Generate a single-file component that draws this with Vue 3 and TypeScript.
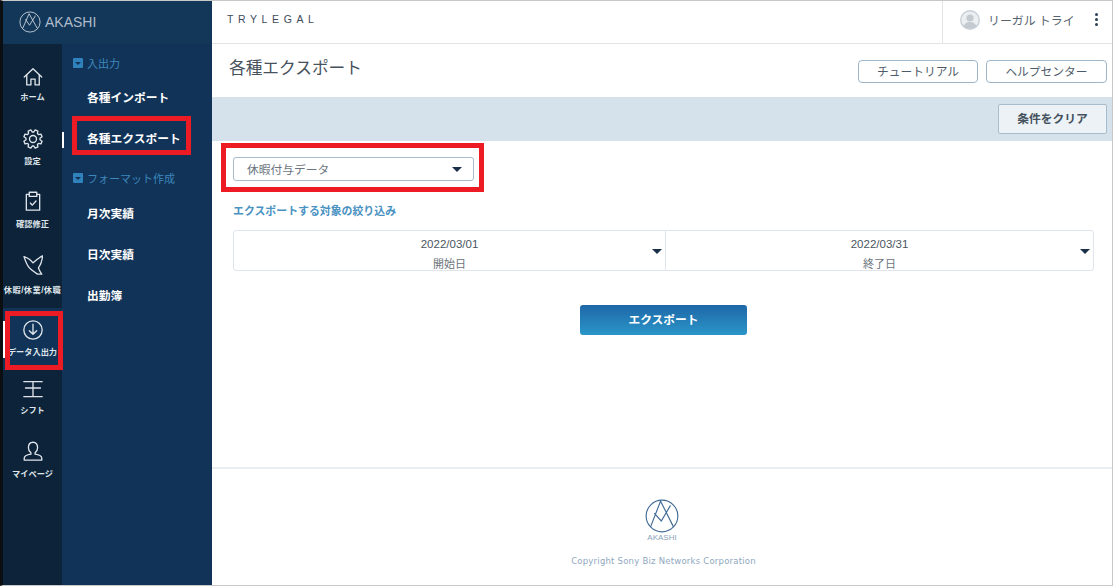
<script setup lang="ts">
interface NavItem { label: string; icon: string; active?: boolean }
const nav: NavItem[] = [
  { label: 'ホーム', icon: 'home' },
  { label: '設定', icon: 'gear' },
  { label: '確認修正', icon: 'check' },
  { label: '休暇/休業/休職', icon: 'dove' },
  { label: 'データ入出力', icon: 'download', active: true },
  { label: 'シフト', icon: 'shift' },
  { label: 'マイページ', icon: 'user' },
]

function gearPath(): string {
  const pts: string[] = []
  const at = (r: number, deg: number): string => {
    const a = (deg * Math.PI) / 180
    return `${(12 + r * Math.cos(a)).toFixed(2)} ${(12 + r * Math.sin(a)).toFixed(2)}`
  }
  for (let i = 0; i < 8; i++) {
    const c = i * 45 + 22.5
    pts.push(at(8.4, c - 17), at(11.2, c - 9), at(11.2, c + 9), at(8.4, c + 17))
  }
  return `M${pts.join(' L')} Z`
}
const gear = gearPath()
</script>

<template>
  <div class="frame">
    <aside class="side">
      <div class="brand">
        <svg class="brand-logo" viewBox="0 0 24 24" fill="none">
          <circle cx="12" cy="12" r="11" />
          <path d="M4 19 L11 3 L20 19 M7 9 L11.5 15.5 L18 5" />
        </svg>
        <span>AKASHI</span>
      </div>
      <div class="side-body">
        <nav class="rail">
          <a v-for="n in nav" :key="n.label" class="rail-item" :class="[`i-${n.icon}`, { active: n.active }]">
            <svg class="rail-icon" viewBox="0 0 24 24" fill="none">
              <template v-if="n.icon === 'home'">
                <path d="M1.5 12 L12 2 L22.5 12" />
                <path d="M4.5 9.5 V21.5 H9.5 V14.5 H14.5 V21.5 H19.5 V9.5" />
              </template>
              <template v-else-if="n.icon === 'gear'">
                <circle cx="12" cy="12" r="4.2" />
                <path :d="gear" />
              </template>
              <template v-else-if="n.icon === 'check'">
                <path d="M7.5 4 H4 V23 H20 V4 H16.5" />
                <path d="M7.5 1.5 H16.5 V6.5 H7.5 Z" />
                <path d="M8.8 14.5 L11.2 17 L15.6 12" />
              </template>
              <template v-else-if="n.icon === 'dove'">
                <path d="M1.2 2 C5 3 9 6 12 9.5 C15 7 19 3 23.5 1 C23 7 21 12 18.5 15.5 C19.5 18 21 21 22.5 23 L17.5 23 C13 20 9 17.5 6.5 14 C4 10.5 2.5 6 1.2 2 Z" />
              </template>
              <template v-else-if="n.icon === 'download'">
                <circle cx="12" cy="12" r="11" />
                <path d="M12 5 V17 M7.6 12.8 L12 17.2 L16.4 12.8" />
              </template>
              <template v-else-if="n.icon === 'shift'">
                <path d="M1 2 H23 M3 9.6 H21 M1 20 H23 M12 2 V20" />
              </template>
              <template v-else>
                <path d="M12 1.5 C8 1.5 6.5 4.5 6.5 8 C6.5 11 8 13 9.5 14.2 V15.8 C5.5 16.5 1.5 17.5 1.5 20.5 V23 H22.5 V20.5 C22.5 17.5 18.5 16.5 14.5 15.8 V14.2 C16 13 17.5 11 17.5 8 C17.5 4.5 16 1.5 12 1.5 Z" />
              </template>
            </svg>
            <span class="rail-label">{{ n.label }}</span>
          </a>
        </nav>
        <div class="sub">
          <div class="sub-head"><i class="sq"></i>入出力</div>
          <a class="sub-link">各種インポート</a>
          <a class="sub-link">各種エクスポート</a>
          <div class="sub-head second"><i class="sq"></i>フォーマット作成</div>
          <a class="sub-link">月次実績</a>
          <a class="sub-link">日次実績</a>
          <a class="sub-link">出勤簿</a>
        </div>
      </div>
    </aside>

    <main class="main">
      <header class="top">
        <div class="company">TRYLEGAL</div>
        <div class="user">
          <svg class="avatar" viewBox="0 0 20 20">
            <circle cx="10" cy="10" r="10" fill="#c9d0d6" />
            <circle cx="10" cy="10" r="8.6" fill="#eceff1" />
            <circle cx="10" cy="8" r="3.6" fill="#c3cad0" />
            <path d="M3.6 16 C5 12.8 7.5 12 10 12 C12.5 12 15 12.8 16.4 16 C14.6 17.8 12.4 18.6 10 18.6 C7.6 18.6 5.4 17.8 3.6 16 Z" fill="#c3cad0" />
          </svg>
          <span class="user-name">リーガル トライ</span>
          <span class="dots"><i></i><i></i><i></i></span>
        </div>
      </header>

      <div class="title-row">
        <h1>各種エクスポート</h1>
        <div class="title-btns">
          <button class="outline b1">チュートリアル</button>
          <button class="outline b2">ヘルプセンター</button>
        </div>
      </div>

      <div class="band"><button class="clear">条件をクリア</button></div>

      <section class="content">
        <div class="select"><span class="select-text">休暇付与データ</span><i class="caret"></i></div>
        <div class="filter-title">エクスポートする対象の絞り込み</div>
        <div class="range">
          <div class="range-cell start">
            <div class="date">2022/03/01</div>
            <div class="date-label">開始日</div>
            <i class="caret"></i>
          </div>
          <div class="range-cell end">
            <div class="date">2022/03/31</div>
            <div class="date-label">終了日</div>
            <i class="caret"></i>
          </div>
        </div>
        <div class="export-row"><button class="export">エクスポート</button></div>
      </section>

      <footer class="foot">
        <svg class="foot-logo" viewBox="0 0 24 24" fill="none">
          <circle cx="12" cy="12" r="11.2" />
          <path d="M4 19.5 L11 1.5 L20 19.5 M6.5 10 L11.5 15.5 L18 4.5" />
        </svg>
        <div class="foot-name">AKASHI</div>
        <div class="copy">Copyright Sony Biz Networks Corporation</div>
      </footer>
    </main>

    <div class="mark m1"></div>
    <div class="mark m2"></div>
    <div class="mark m3"></div>
  </div>
</template>

<style scoped>
.frame {
  position: relative;
  display: flex;
  width: 1113px;
  height: 586px;
  box-sizing: border-box;
  border-top: 1px solid #c8c8c8;
  border-bottom: 1px solid #c8c8c8;
  border-left: 3px solid #0b0f12;
  border-right: 1px solid #c8c8c8;
  overflow: hidden;
  background: #fff;
  font-family: "Liberation Sans", "Noto Sans CJK JP", sans-serif;
  color: #3b4a5a;
}
.side {
  width: 209px;
  flex: none;
  display: flex;
  flex-direction: column;
  background: #113358;
}
.brand {
  height: 43px;
  flex: none;
  box-sizing: border-box;
  display: flex;
  align-items: center;
  padding: 0 0 1px 16px;
  gap: 4px;
  color: #aebccb;
  font-size: 14px;
  background: #133759;
}
.brand-logo { width: 22px; height: 22px; }
.brand-logo circle, .brand-logo path { stroke: #c4ced8; stroke-width: 1; }
.side-body { flex: 1; display: flex; min-height: 0; }
.rail {
  width: 59px;
  flex: none;
  background: #0d2339;
  display: flex;
  flex-direction: column;
}
.rail-item {
  flex: none;
  display: flex;
  flex-direction: column;
  align-items: center;
  box-sizing: border-box;
  position: relative;
  color: #dfe5ea;
}
.i-home { height: 63px; padding-top: 23px; }
.i-gear { height: 63px; padding-top: 22px; }
.i-check { height: 63px; padding-top: 21px; }
.i-dove { height: 75px; padding-top: 22px; }
.i-download { height: 62px; padding-top: 12px; }
.i-shift { height: 61px; padding-top: 10px; }
.i-user { height: 60px; padding-top: 10px; }
.rail-item.active { background: #113358; }
.rail-item.active::before {
  content: "";
  position: absolute;
  left: 0;
  top: 13px;
  height: 37px;
  width: 2px;
  background: #fff;
}
.rail-icon {
  width: 20px;
  height: 20px;
  flex: none;
  stroke: #dfe5ea;
  stroke-width: 1.6;
  stroke-linejoin: round;
  stroke-linecap: round;
}
.rail-label {
  margin-top: 7px;
  font-size: 8.2px;
  line-height: 12px;
  font-weight: 700;
  white-space: nowrap;
}
.i-home .rail-label, .i-shift .rail-label { margin-top: 5px; }
.i-check .rail-label { margin-top: 8px; }
.i-dove .rail-label { margin-top: 10px; letter-spacing: 0.45px; }
.i-user .rail-label { margin-top: 8px; }
.sub { flex: 1; position: relative; padding: 11px 0 0 11px; }
.sub::before {
  content: "";
  position: absolute;
  left: 0;
  top: 88px;
  width: 2px;
  height: 16px;
  background: #fff;
}
.sub-head {
  display: flex;
  align-items: center;
  gap: 4px;
  height: 16px;
  font-size: 11px;
  color: #3d87bd;
}
.sub-head.second { margin-top: 11px; }
.sub-head.second + .sub-link { margin-top: 7px; }
.sq {
  width: 10px;
  height: 10px;
  border-radius: 1px;
  background: #2f82bb;
  position: relative;
  flex: none;
}
.sq::after {
  content: "";
  position: absolute;
  left: 2px;
  top: 4px;
  border: 3px solid transparent;
  border-top: 3px solid #113358;
  border-bottom: 0;
}
.sub-link {
  display: block;
  height: 41px;
  line-height: 41px;
  padding-left: 14px;
  font-size: 11.75px;
  font-weight: 700;
  color: #fff;
  white-space: nowrap;
}
.sub-head + .sub-link { margin-top: 6px; }
.main { flex: 1; min-width: 0; display: flex; flex-direction: column; }
.top {
  height: 43px;
  flex: none;
  box-sizing: border-box;
  display: flex;
  justify-content: space-between;
  border-bottom: 1px solid #e1e5e8;
}
.company {
  padding-left: 15px;
  line-height: 37px;
  font-size: 10.5px;
  letter-spacing: 4.6px;
  color: #3d4a5c;
}
.user {
  width: 170px;
  box-sizing: border-box;
  border-left: 1px solid #e1e5e8;
  display: flex;
  align-items: center;
  padding: 0 0 4px 17px;
  position: relative;
}
.avatar { width: 20px; height: 20px; flex: none; }
.user-name { margin: 0 0 1px 8px; font-size: 11.9px; color: #56636f; white-space: nowrap; }
.dots {
  position: absolute;
  right: 14px;
  top: 12px;
  display: flex;
  flex-direction: column;
  gap: 2px;
}
.dots i { width: 3px; height: 3px; border-radius: 50%; background: #2b3f55; }
.title-row {
  height: 53px;
  flex: none;
  display: flex;
  justify-content: space-between;
  align-items: flex-start;
  padding: 0 5px 0 17px;
}
h1 {
  margin: 12px 0 0;
  font-size: 16.7px;
  line-height: 26px;
  font-weight: 400;
  color: #47525c;
}
.title-btns { display: flex; gap: 8px; padding-top: 16px; }
.outline {
  height: 23px;
  padding: 0 0 3px;
  font: inherit;
  font-size: 11.75px;
  color: #4d5a67;
  background: #fff;
  border: 1px solid #9fb6c8;
  border-radius: 4px;
}
.b1 { width: 120px; }
.b2 { width: 121px; }
.band {
  height: 44px;
  flex: none;
  background: #d5e2eb;
  display: flex;
  justify-content: flex-end;
  padding: 7px 5px 0 0;
  box-sizing: border-box;
}
.clear {
  width: 109px;
  height: 30px;
  padding: 0 0 3px;
  font: inherit;
  font-size: 11.75px;
  font-weight: 700;
  color: #45525e;
  background: #edf2f6;
  border: 1px solid #a9bccb;
  border-radius: 2px;
}
.content { padding: 16px 18px 0 21px; flex: 1; }
.select {
  width: 241px;
  height: 24px;
  box-sizing: border-box;
  border: 1px solid #a9bccb;
  border-radius: 3px;
  display: flex;
  align-items: center;
  justify-content: space-between;
  padding: 0 11px 0 13px;
  font-size: 11.75px;
  color: #6b7680;
}
.select-text { padding-bottom: 2px; }
.caret {
  width: 0;
  height: 0;
  border-left: 5px solid transparent;
  border-right: 5px solid transparent;
  border-top: 5px solid #1a2f49;
}
.filter-title {
  margin-top: 22px;
  height: 16px;
  line-height: 16px;
  font-size: 10.9px;
  font-weight: 700;
  color: #4a92c2;
}
.range {
  margin-top: 11px;
  display: flex;
  height: 41px;
  box-sizing: border-box;
  border: 1px solid #dfe5ea;
  border-radius: 3px;
}
.range-cell {
  position: relative;
  text-align: center;
  padding-top: 4px;
  box-sizing: border-box;
  font-size: 11.5px;
  color: #4a5560;
}
.range-cell.start { width: 431px; flex: none; }
.range-cell.end { flex: 1; border-left: 1px solid #dfe5ea; }
.range-cell .caret { position: absolute; top: 18px; right: 3px; }
.date { line-height: 18px; }
.date-label { line-height: 18px; margin-top: 2px; font-size: 11px; color: #6b747c; }
.export-row { display: flex; justify-content: center; margin-top: 34px; }
.export {
  width: 167px;
  height: 30px;
  padding: 0 0 4px;
  border: 0;
  border-radius: 3px;
  font: inherit;
  font-size: 11.75px;
  font-weight: 700;
  color: #fff;
  background: linear-gradient(#1f67a8, #2a96c8);
}
.foot {
  height: 118px;
  flex: none;
  border-top: 2px solid #e9eef0;
  box-sizing: border-box;
  display: flex;
  flex-direction: column;
  align-items: center;
  padding-top: 30px;
}
.foot-logo { width: 34px; height: 34px; flex: none; }
.foot-logo circle, .foot-logo path { stroke: #3f6a95; stroke-width: 0.8; }
.foot-name { font-size: 8px; line-height: 10px; color: #8da3ba; }
.copy {
  margin-top: 13px;
  padding-left: 3px;
  font-family: "DejaVu Sans", sans-serif;
  font-size: 8.5px;
  color: #8fa8c0;
  letter-spacing: 0.22px;
}
.mark { position: absolute; border: 5px solid #ed1c24; box-sizing: border-box; }
.m1 { left: 69px; top: 115px; width: 119px; height: 39px; }
.m2 { left: 218px; top: 142px; width: 263px; height: 49px; }
.m3 { left: 2px; top: 310px; width: 58px; height: 59px; }
</style>
